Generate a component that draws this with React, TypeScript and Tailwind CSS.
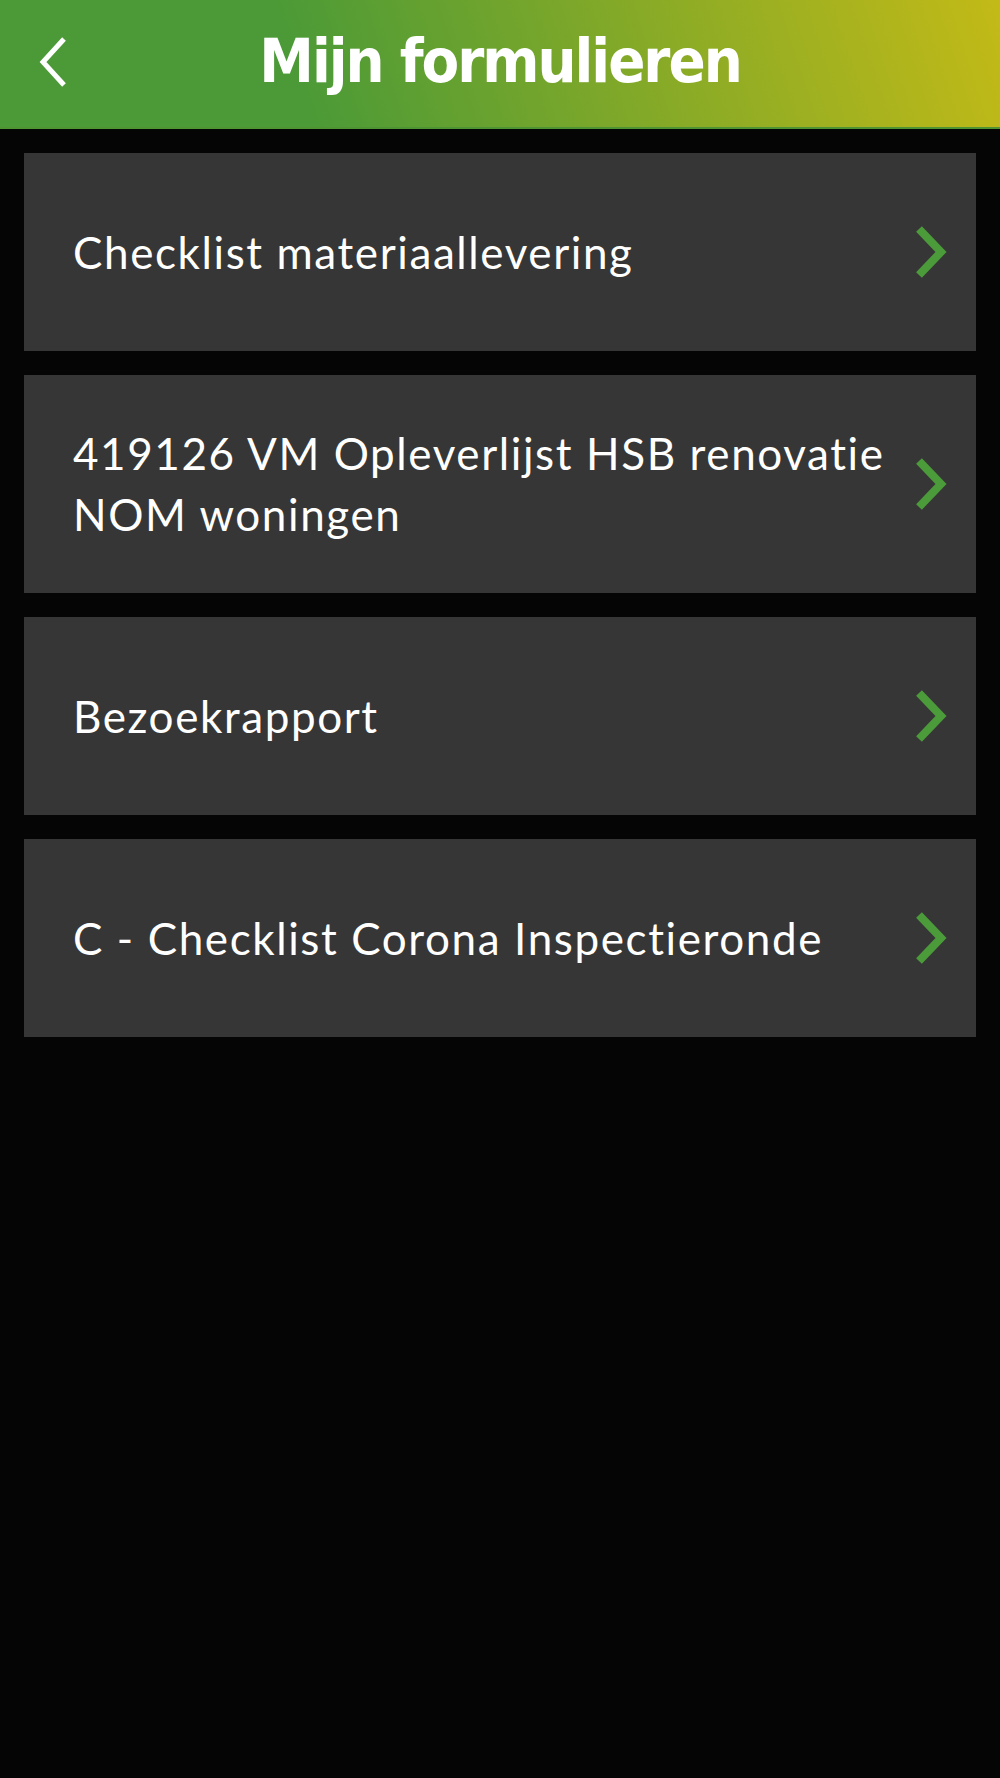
import React from "react";

const items = [
  "Checklist materiaallevering",
  "419126 VM Opleverlijst HSB renovatie NOM woningen",
  "Bezoekrapport",
  "C - Checklist Corona Inspectieronde",
];

function Chevron() {
  return (
    <svg width="34" height="52" viewBox="0 0 34 52" className="shrink-0">
      <polyline
        points="5,3 27,26 5,49"
        fill="none"
        stroke="#4b9b3a"
        strokeWidth="8"
        strokeLinecap="butt"
        strokeLinejoin="miter"
      />
    </svg>
  );
}

export default function App() {
  return (
    <div className="min-h-[1778px] w-[1000px] bg-[#050505]">
      <header className="relative flex h-[129px] items-center justify-center border-b-2 border-[#4f9433] bg-[linear-gradient(72deg,#4b9a37_30%,#c3ba17_100%)]">
        <svg
          width="30"
          height="52"
          viewBox="0 0 30 52"
          className="absolute left-[38px] top-[36px]"
        >
          <polyline
            points="26,3 5,26 26,49"
            fill="none"
            stroke="#ffffff"
            strokeWidth="5"
            strokeLinecap="butt"
            strokeLinejoin="miter"
          />
        </svg>
        <h1
          className="pb-[6px] text-[61px] font-bold leading-none tracking-[-2px] text-white"
          style={{ fontFamily: '"Liberation Sans Narrow", "DejaVu Sans Condensed", "Open Sans", sans-serif' }}
        >
          Mijn formulieren
        </h1>
      </header>
      <main className="flex flex-col gap-[24px] px-[24px] pt-[24px]">
        {items.map((t) => (
          <div
            key={t}
            className="flex min-h-[198px] items-center justify-between bg-[#363636] py-[48px] pl-[49px] pr-[28px]"
          >
            <span
              className="max-w-[835px] text-[44px] leading-[61px] tracking-[1.6px] text-white"
              style={{ fontFamily: 'Lato, "Open Sans", sans-serif' }}
            >
              {t}
            </span>
            <Chevron />
          </div>
        ))}
      </main>
    </div>
  );
}
